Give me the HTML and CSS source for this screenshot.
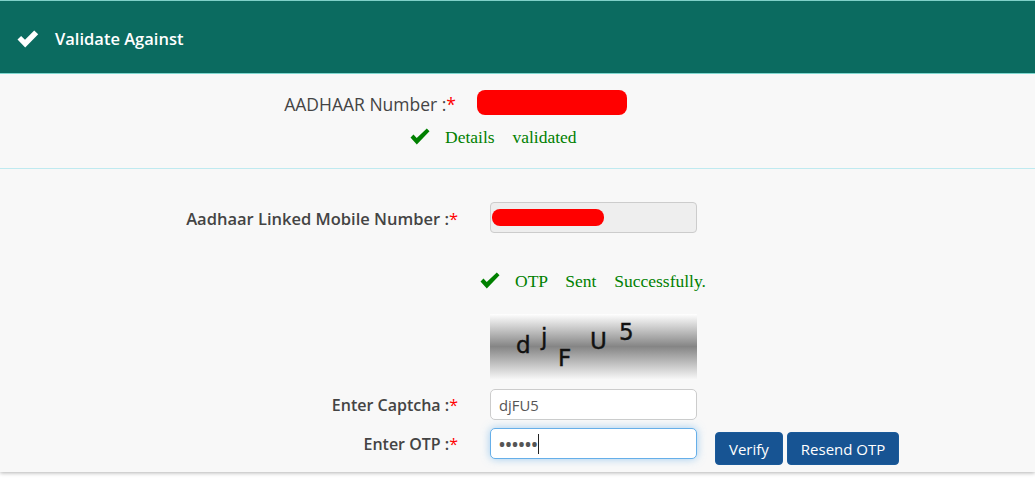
FILE: index.html
```html
<!DOCTYPE html>
<html lang="en">

<head>
  <meta charset="UTF-8">
  <meta name="viewport" content="width=device-width, initial-scale=1.0">
  <title>Validate Against</title>

  <link rel="stylesheet" href="styles.css">
</head>

<body>
  <div class="panel">
    <div class="panel-head">
      <svg class="check" width="22" height="18" viewBox="0 0 22 18"><path d="M0.5 9.5l3.6-3.6 3.9 3.9L17.2 0.5l4 3.8L8.2 17.5z" fill="#fff"/></svg>
      <h1>Validate Against</h1>
    </div>

    <div class="aadhaar">
      <div class="row row-aadhaar">
        <label class="label-aadhaar">AADHAAR Number :<span class="req">*</span></label>
        <div class="masked-pill"></div>
      </div>
      <div class="status status-details">
        <svg class="check" width="20" height="17" viewBox="0 0 20 17"><path d="M0.5 9.5l3-3 3.2 3.4L16.8 0.5l2.7 2.8L6.8 16.5z" fill="#008000"/></svg>
        <span>Details validated</span>
      </div>
    </div>

    <div class="otp-form">
      <div class="row row-mobile">
        <label>Aadhaar Linked Mobile Number :<span class="req">*</span></label>
        <div class="readonly-box"><div class="masked-bar"></div></div>
      </div>

      <div class="status status-otp">
        <svg class="check" width="20" height="17" viewBox="0 0 20 17"><path d="M0.5 9.5l3-3 3.2 3.4L16.8 0.5l2.7 2.8L6.8 16.5z" fill="#008000"/></svg>
        <span>OTP Sent Successfully.</span>
      </div>

      <svg class="captcha" width="207" height="65" viewBox="0 0 207 65">
        <defs>
          <linearGradient id="captchaBg" x1="0" y1="0" x2="0" y2="1">
            <stop offset="0" stop-color="#fff"/>
            <stop offset="0.5" stop-color="#858585"/>
            <stop offset="1" stop-color="#f6f6f6"/>
          </linearGradient>
        </defs>
        <rect width="207" height="65" fill="url(#captchaBg)"/>
        <text x="26" y="39">d</text>
        <text x="51" y="31">j</text>
        <text x="68" y="52">F</text>
        <text x="100" y="35">U</text>
        <text x="129" y="26">5</text>
      </svg>

      <div class="row row-captcha">
        <label>Enter Captcha :<span class="req">*</span></label>
        <input class="field" type="text" value="djFU5">
      </div>

      <div class="row row-otp">
        <label>Enter OTP :<span class="req">*</span></label>
        <div class="field field-focus">&#8226;&#8226;&#8226;&#8226;&#8226;&#8226;<span class="caret"></span></div>
        <div class="actions">
          <button>Verify</button>
          <button>Resend OTP</button>
        </div>
      </div>
    </div>
  </div>
</body>

</html>
```

FILE: styles.css
```css
* {
  margin: 0;
  padding: 0;
  box-sizing: border-box;
}

body {
  background: #fff;
  color: #444;
  font-family: "Open Sans", "Noto Sans", sans-serif;
  font-size: 16px;
  height: 489px;
  overflow: hidden;
}

.panel {
  height: 472px;
  background: #f8f8f8;
  box-shadow: 0 1px 4px rgba(0, 0, 0, .3);
}

.panel-head {
  height: 74px;
  display: flex;
  align-items: center;
  padding: 3px 0 0 17px;
  gap: 16px;
  background: #0b6b60;
  border-top: 1px solid #7fd0c8;
  border-bottom: 1px solid #7fd8d0;
  color: #fff;
}

.panel-head h1 {
  font-size: 16.5px;
  font-weight: 600;
}

.aadhaar {
  height: 95px;
  padding-top: 16px;
  border-bottom: 1px solid #bfeaf0;
}

.row {
  display: flex;
  align-items: center;
}

.row label {
  width: 458px;
  padding-top: 1px;
  text-align: right;
  font-weight: 600;
  font-size: 16.5px;
  flex-shrink: 0;
}

.req {
  color: #f00;
  font-weight: 400;
}

.row-aadhaar {
  height: 25px;
}

.row-aadhaar .label-aadhaar {
  width: 456px;
  padding-top: 3px;
  font-weight: 400;
  font-size: 17.5px;
}

.masked-pill {
  width: 150px;
  height: 25px;
  margin-left: 21px;
  background: #f00;
  border-radius: 8px;
}

.status {
  display: flex;
  align-items: center;
  height: 21px;
  color: #008000;
  font-family: "Liberation Serif", serif;
  font-size: 17.5px;
  line-height: 19px;
  word-spacing: 13.5px;
}

.status svg {
  margin-top: -3px;
}

.status-details {
  margin-top: 12px;
  padding-left: 410px;
  gap: 15px;
}

.otp-form {
  padding-top: 33px;
}

.row-mobile {
  height: 31px;
}

.readonly-box {
  width: 207px;
  height: 31px;
  margin-left: 32px;
  padding: 6px 1px;
  background: #eee;
  border: 1px solid #ccc;
  border-radius: 4px;
}

.masked-bar {
  width: 112px;
  height: 17px;
  background: #f00;
  border-radius: 8px;
}

.status-otp {
  margin-top: 38px;
  padding-left: 480px;
  gap: 15px;
}

.captcha {
  display: block;
  margin: 22px 0 0 490px;
}

.captcha text {
  font-family: "DejaVu Sans", sans-serif;
  font-size: 23px;
  fill: #111;
  stroke: #111;
  stroke-width: .4px;
}

.row-captcha {
  height: 31px;
  margin-top: 10px;
}

.row-captcha label,
.row-otp label {
  font-size: 16px;
}

.field {
  display: block;
  width: 207px;
  height: 31px;
  margin-left: 32px;
  padding: 0 8px;
  background: #fff;
  border: 1px solid #ccc;
  border-radius: 5px;
  color: #555;
  font-family: "Open Sans", "Noto Sans", sans-serif;
  font-size: 14.8px;
  outline: none;
}

.row-otp {
  height: 31px;
  margin-top: 8px;
}

.field-focus {
  display: flex;
  align-items: center;
  border-color: #66afe9;
  box-shadow: 0 0 8px rgba(102, 175, 233, .6);
  font-size: 16px;
  font-weight: 700;
  letter-spacing: .5px;
}

.caret {
  width: 1px;
  height: 20px;
  background: #222;
}

.actions {
  display: flex;
  gap: 4px;
  margin: 4px 0 0 18px;
  align-self: flex-start;
}

.actions button {
  height: 33px;
  padding: 0 13px;
  background: #175493;
  border: 1px solid #1a5a9a;
  border-radius: 4px;
  color: #fff;
  font-family: "Open Sans", "Noto Sans", sans-serif;
  font-size: 15px;
}
```
